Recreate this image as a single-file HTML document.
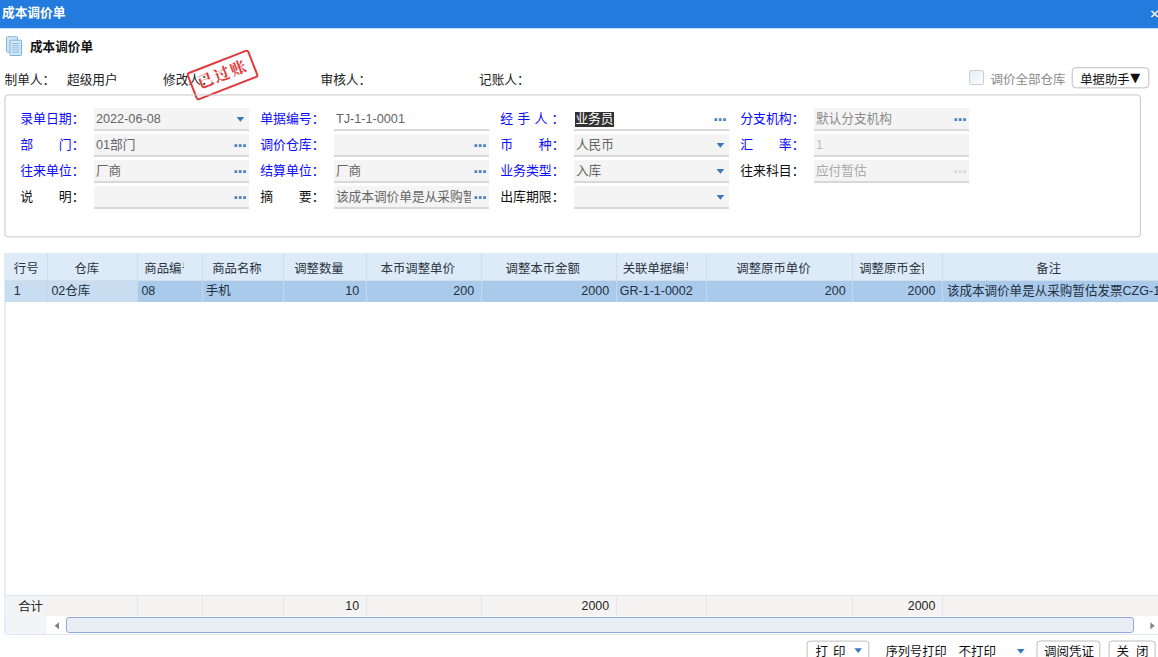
<!DOCTYPE html>
<html lang="zh-CN">
<head>
<meta charset="utf-8">
<title>成本调价单</title>
<style>
html,body{margin:0;padding:0;}
body{width:1158px;height:657px;overflow:hidden;background:#fff;position:relative;
  font-family:"Liberation Sans","Noto Sans CJK SC",sans-serif;font-size:12.7px;color:#222;}
.abs{position:absolute;white-space:nowrap;}
#titlebar{left:0;top:0;width:1158px;height:28px;background:#237cdd;border-bottom:1px solid #c3dbf6;}
#titlebar .t{left:2px;top:0.6px;line-height:24px;font-weight:bold;font-size:12.7px;color:#fff;}
#closex{left:1150px;top:3.4px;font-size:15.5px;font-weight:bold;line-height:22px;color:#dde9fa;text-shadow:0 1px 0 rgba(10,30,90,.45);font-family:"Liberation Sans",sans-serif;}
#h1{left:30px;top:36.8px;line-height:21px;font-weight:bold;font-size:12.6px;color:#111;}
.who{top:69.5px;line-height:21px;font-size:12.7px;color:#222;}
.lb{line-height:23px;margin-top:-1.1px;margin-left:-0.8px;font-size:12.9px;color:#0a0aff;width:58px;}
.lb.k{color:#111;}
.in{width:155.5px;height:21px;background:#f4f4f4;border-bottom:2px solid #d8d8d8;line-height:21px;font-size:12.7px;color:#646464;overflow:hidden;}
.in.w{background:#fff;}
.in span.v{position:absolute;left:2.2px;top:0.7px;}
.dots{position:absolute;right:2.2px;top:8.2px;width:13px;height:7px;fill:#4a84c6;}
.dots.dis{opacity:.22;}
.arr{position:absolute;right:4.9px;top:9px;width:7.8px;height:4.8px;background:#3a76bc;clip-path:polygon(0 0,100% 0,50% 100%);}
.sel{background:#333;color:#fff;display:inline-block;line-height:15px;padding:0 0.5px;margin-left:-1px;}
.th{height:27.5px;line-height:32px;font-size:12.4px;color:#2b3440;box-sizing:border-box;overflow:hidden;}
.td{height:21.5px;line-height:21.2px;font-size:12.5px;color:#22303f;box-sizing:border-box;padding:0 6.6px 0 3.1px;overflow:hidden;}
.tf{height:20.5px;line-height:20.5px;font-size:12.4px;color:#222;box-sizing:border-box;padding:0 6.6px 0 3.5px;overflow:hidden;}
.ft{line-height:23px;font-size:12.5px;color:#111;}
.btn{border:1px solid #c4c4c4;border-radius:4px;background:#fff;box-sizing:border-box;color:#111;text-align:center;}
</style>
</head>
<body>
<!-- title bar -->
<div id="titlebar" class="abs"><span class="abs t">成本调价单</span></div>
<div id="closex" class="abs">×</div>

<!-- document heading -->
<svg class="abs" style="left:5px;top:35px" width="18" height="22" viewBox="0 0 18 22">
  <rect x="1.5" y="1.7" width="11" height="15.5" rx="1" fill="#cfe4f5" stroke="#86b6df" stroke-width="1"/>
  <rect x="5" y="5.2" width="11.5" height="15.3" rx="1" fill="#d6e9f8" stroke="#7aaedb" stroke-width="1"/>
  <path d="M7 8.5h7.5M7 10.7h7.5M7 12.9h7.5M7 15.1h7.5M7 17.3h7.5" stroke="#8dbbe2" stroke-width="1"/>
</svg>
<div id="h1" class="abs">成本调价单</div>

<!-- people row -->
<div class="abs who" style="left:4.5px">制单人：</div>
<div class="abs who" style="left:67px">超级用户</div>
<div class="abs who" style="left:163px">修改人：</div>
<div class="abs who" style="left:320.5px">审核人：</div>
<div class="abs who" style="left:479px">记账人：</div>

<!-- stamp -->
<div class="abs" style="left:188.5px;top:59.5px;width:63px;height:26px;border:2px solid #e23a3a;border-radius:3px;transform:rotate(-21.3deg);transform-origin:50% 50%;
  font-family:'Liberation Serif','Noto Serif CJK SC',serif;font-weight:bold;font-size:16px;line-height:25px;color:#e23a3a;text-align:center;letter-spacing:1.5px;text-indent:0.5px;">已过账</div>

<!-- top-right controls -->
<div class="abs" style="left:969.3px;top:70px;width:13px;height:13px;border:1px solid #c3d0dc;border-radius:2px;background:linear-gradient(135deg,#e8eef4,#fbfcfd);"></div>
<div class="abs" style="left:990.5px;top:69.6px;line-height:21px;font-size:12.5px;color:#8a8a8a;">调价全部仓库</div>
<svg class="abs" style="left:1066px;top:62px" width="92" height="32" viewBox="1066 62 92 32"><rect x="1072.2" y="67.7" width="76.6" height="20.15" rx="3.5" ry="3.5" fill="#fff" stroke="#bdbdbd" stroke-width="1"/></svg>
<div class="abs" style="left:1080.3px;top:68.5px;line-height:23.5px;font-size:12.3px;color:#111;">单据助手<span style="font-family:'DejaVu Sans',sans-serif;font-size:13px;line-height:10px;margin-left:0.8px;vertical-align:1.2px">▼</span></div>

<!-- form panel -->
<svg class="abs" style="left:0;top:90px" width="1158" height="152" viewBox="0 90 1158 152"><rect x="4.95" y="94.95" width="1135.45" height="141.95" rx="3" ry="3" fill="none" stroke="#c6c6c6" stroke-width="1"/></svg>
<div class="abs lb " style="left:21px;top:108px">录单日期：</div>
<div class="abs in " style="left:93.7px;top:108px"><span class="v" style="">2022-06-08</span><i class="arr"></i></div>
<div class="abs lb " style="left:261px;top:108px">单据编号：</div>
<div class="abs in w" style="left:333.7px;top:108px"><span class="v" style="">TJ-1-1-0001</span></div>
<div class="abs lb " style="left:501px;top:108px"><span style='letter-spacing:4.2px'>经手人：</span></div>
<div class="abs in w" style="left:573.7px;top:108px"><span class="v" style=""><span class='sel'>业务员</span></span><svg class="dots" viewBox="0 0 13 7"><rect x="0.5" y="2.2" width="2.75" height="2.8"/><rect x="4.85" y="2.2" width="2.75" height="2.8"/><rect x="9.2" y="2.2" width="2.75" height="2.8"/></svg></div>
<div class="abs lb " style="left:741px;top:108px">分支机构：</div>
<div class="abs in " style="left:813.7px;top:108px"><span class="v" style="color:#8c8c8c">默认分支机构</span><svg class="dots" viewBox="0 0 13 7"><rect x="0.5" y="2.2" width="2.75" height="2.8"/><rect x="4.85" y="2.2" width="2.75" height="2.8"/><rect x="9.2" y="2.2" width="2.75" height="2.8"/></svg></div>
<div class="abs lb " style="left:21px;top:134px">部　　门：</div>
<div class="abs in " style="left:93.7px;top:134px"><span class="v" style="">01部门</span><svg class="dots" viewBox="0 0 13 7"><rect x="0.5" y="2.2" width="2.75" height="2.8"/><rect x="4.85" y="2.2" width="2.75" height="2.8"/><rect x="9.2" y="2.2" width="2.75" height="2.8"/></svg></div>
<div class="abs lb " style="left:261px;top:134px">调价仓库：</div>
<div class="abs in " style="left:333.7px;top:134px"><svg class="dots" viewBox="0 0 13 7"><rect x="0.5" y="2.2" width="2.75" height="2.8"/><rect x="4.85" y="2.2" width="2.75" height="2.8"/><rect x="9.2" y="2.2" width="2.75" height="2.8"/></svg></div>
<div class="abs lb " style="left:501px;top:134px">币　　种：</div>
<div class="abs in " style="left:573.7px;top:134px"><span class="v" style="">人民币</span><i class="arr"></i></div>
<div class="abs lb " style="left:741px;top:134px">汇　　率：</div>
<div class="abs in " style="left:813.7px;top:134px"><span class="v" style="color:#bdbdbd">1</span></div>
<div class="abs lb " style="left:21px;top:160px">往来单位：</div>
<div class="abs in " style="left:93.7px;top:160px"><span class="v" style="">厂商</span><svg class="dots" viewBox="0 0 13 7"><rect x="0.5" y="2.2" width="2.75" height="2.8"/><rect x="4.85" y="2.2" width="2.75" height="2.8"/><rect x="9.2" y="2.2" width="2.75" height="2.8"/></svg></div>
<div class="abs lb " style="left:261px;top:160px">结算单位：</div>
<div class="abs in " style="left:333.7px;top:160px"><span class="v" style="">厂商</span><svg class="dots" viewBox="0 0 13 7"><rect x="0.5" y="2.2" width="2.75" height="2.8"/><rect x="4.85" y="2.2" width="2.75" height="2.8"/><rect x="9.2" y="2.2" width="2.75" height="2.8"/></svg></div>
<div class="abs lb " style="left:501px;top:160px">业务类型：</div>
<div class="abs in " style="left:573.7px;top:160px"><span class="v" style="">入库</span><i class="arr"></i></div>
<div class="abs lb k" style="left:741px;top:160px">往来科目：</div>
<div class="abs in " style="left:813.7px;top:160px"><span class="v" style="color:#a9a9a9">应付暂估</span><svg class="dots dis" viewBox="0 0 13 7"><rect x="0.5" y="2.2" width="2.75" height="2.8"/><rect x="4.85" y="2.2" width="2.75" height="2.8"/><rect x="9.2" y="2.2" width="2.75" height="2.8"/></svg></div>
<div class="abs lb k" style="left:21px;top:186px">说　　明：</div>
<div class="abs in " style="left:93.7px;top:186px"><svg class="dots" viewBox="0 0 13 7"><rect x="0.5" y="2.2" width="2.75" height="2.8"/><rect x="4.85" y="2.2" width="2.75" height="2.8"/><rect x="9.2" y="2.2" width="2.75" height="2.8"/></svg></div>
<div class="abs lb k" style="left:261px;top:186px">摘　　要：</div>
<div class="abs in " style="left:333.7px;top:186px"><span class="v" style="width:135.5px;overflow:hidden;display:block">该成本调价单是从采购暂估发票</span><svg class="dots" viewBox="0 0 13 7"><rect x="0.5" y="2.2" width="2.75" height="2.8"/><rect x="4.85" y="2.2" width="2.75" height="2.8"/><rect x="9.2" y="2.2" width="2.75" height="2.8"/></svg></div>
<div class="abs lb k" style="left:501px;top:186px">出库期限：</div>
<div class="abs in " style="left:573.7px;top:186px"><i class="arr"></i></div>
<div class="abs" id="grid" style="left:4px;top:252.5px;width:1154px;height:382.5px;border-left:2px solid #e4edf7;border-bottom:1px solid #dde9f5;border-radius:0 0 0 3px;box-sizing:border-box;"></div>
<div class="abs" style="left:5px;top:252.5px;width:1153px;height:28.2px;background:#ddeaf7;border-bottom:1px solid #d2deea;box-sizing:border-box;"></div>
<div class="abs th" style="left:5px;top:252.5px;width:42.3px;text-align:center">行号</div>
<div class="abs th" style="left:47.3px;top:252.5px;width:90.0px;border-left:1px solid #cfdbe7;"><div style="margin-left:6px;width:65.0px;overflow:hidden;text-align:center">仓库</div></div>
<div class="abs th" style="left:137.3px;top:252.5px;width:64.4px;border-left:1px solid #cfdbe7;"><div style="margin-left:6px;width:39.4px;overflow:hidden;text-align:left">商品编号</div></div>
<div class="abs th" style="left:201.7px;top:252.5px;width:81.6px;border-left:1px solid #cfdbe7;"><div style="margin-left:6px;width:56.6px;overflow:hidden;text-align:center">商品名称</div></div>
<div class="abs th" style="left:283.3px;top:252.5px;width:82.4px;border-left:1px solid #cfdbe7;"><div style="margin-left:6px;width:57.4px;overflow:hidden;text-align:center">调整数量</div></div>
<div class="abs th" style="left:365.7px;top:252.5px;width:115.0px;border-left:1px solid #cfdbe7;"><div style="margin-left:6px;width:90.0px;overflow:hidden;text-align:center">本币调整单价</div></div>
<div class="abs th" style="left:480.7px;top:252.5px;width:135.0px;border-left:1px solid #cfdbe7;"><div style="margin-left:6px;width:110.0px;overflow:hidden;text-align:center">调整本币金额</div></div>
<div class="abs th" style="left:615.7px;top:252.5px;width:90.0px;border-left:1px solid #cfdbe7;"><div style="margin-left:6px;width:65.0px;overflow:hidden;text-align:left">关联单据编号</div></div>
<div class="abs th" style="left:705.7px;top:252.5px;width:146.5px;border-left:1px solid #cfdbe7;"><div style="margin-left:6px;width:121.5px;overflow:hidden;text-align:center">调整原币单价</div></div>
<div class="abs th" style="left:852.2px;top:252.5px;width:89.8px;border-left:1px solid #cfdbe7;"><div style="margin-left:6px;width:64.8px;overflow:hidden;text-align:left">调整原币金额</div></div>
<div class="abs th" style="left:942px;top:252.5px;width:224.4px;border-left:1px solid #cfdbe7;"><div style="margin-left:6px;width:199.4px;overflow:hidden;text-align:center">备注</div></div>
<div class="abs" style="left:5px;top:280.6px;width:132.3px;height:21.5px;background:#c9ddf1;"></div>
<div class="abs" style="left:137.3px;top:280.6px;width:1020.7px;height:21.5px;background:#a9caeb;"></div>
<div class="abs td" style="top:280.6px;left:5px;width:42.3px;padding-left:8.7px">1</div>
<div class="abs td" style="top:280.6px;left:47.3px;width:90.0px;border-left:1px solid #c3d7ea;">02仓库</div>
<div class="abs td" style="top:280.6px;left:137.3px;width:64.4px;border-left:1px solid #c4d9ee;">08</div>
<div class="abs td" style="top:280.6px;left:201.7px;width:81.6px;border-left:1px solid #c4d9ee;">手机</div>
<div class="abs td" style="top:280.6px;left:283.3px;width:82.4px;text-align:right;border-left:1px solid #c4d9ee;">10</div>
<div class="abs td" style="top:280.6px;left:365.7px;width:115.0px;text-align:right;border-left:1px solid #c4d9ee;">200</div>
<div class="abs td" style="top:280.6px;left:480.7px;width:135.0px;text-align:right;border-left:1px solid #c4d9ee;">2000</div>
<div class="abs td" style="top:280.6px;left:615.7px;width:90.0px;border-left:1px solid #c4d9ee;">GR-1-1-0002</div>
<div class="abs td" style="top:280.6px;left:705.7px;width:146.5px;text-align:right;border-left:1px solid #c4d9ee;">200</div>
<div class="abs td" style="top:280.6px;left:852.2px;width:89.8px;text-align:right;border-left:1px solid #c4d9ee;">2000</div>
<div class="abs td" style="top:280.6px;left:942px;width:216px;border-left:1px solid #c4d9ee;font-size:12.55px;padding-left:3.9px;">该成本调价单是从采购暂估发票CZG-1-1-0001</div>
<div class="abs" style="left:5px;top:595.3px;width:1153px;height:21px;background:#f5f4f3;border-top:1px solid #d6e6f5;box-sizing:border-box;"></div>
<div class="abs tf" style="left:5px;top:596.3px;width:42.3px;text-align:left;padding-left:13.2px;padding-right:0;background:#f3f4f6;line-height:22.6px">合计</div>
<div class="abs tf" style="left:47.3px;top:595.8px;width:90.0px;text-align:right;border-left:1px solid #f0f2f5;"></div>
<div class="abs tf" style="left:137.3px;top:595.8px;width:64.4px;text-align:right;border-left:1px solid #dbe8f4;"></div>
<div class="abs tf" style="left:201.7px;top:595.8px;width:81.6px;text-align:right;border-left:1px solid #dbe8f4;"></div>
<div class="abs tf" style="left:283.3px;top:595.8px;width:82.4px;text-align:right;border-left:1px solid #dbe8f4;">10</div>
<div class="abs tf" style="left:365.7px;top:595.8px;width:115.0px;text-align:right;border-left:1px solid #dbe8f4;"></div>
<div class="abs tf" style="left:480.7px;top:595.8px;width:135.0px;text-align:right;border-left:1px solid #dbe8f4;">2000</div>
<div class="abs tf" style="left:615.7px;top:595.8px;width:90.0px;text-align:right;border-left:1px solid #dbe8f4;"></div>
<div class="abs tf" style="left:705.7px;top:595.8px;width:146.5px;text-align:right;border-left:1px solid #dbe8f4;"></div>
<div class="abs tf" style="left:852.2px;top:595.8px;width:89.8px;text-align:right;border-left:1px solid #dbe8f4;">2000</div>
<div class="abs tf" style="left:942px;top:595.8px;width:216px;text-align:right;border-left:1px solid #dbe8f4;"></div>
<div class="abs" style="left:6px;top:616.3px;width:41.3px;height:18px;background:#f2f4f7;"></div>
<div class="abs" style="left:47.3px;top:616.3px;width:1110.7px;height:18px;background:#fff;"></div>
<div class="abs" style="left:66.3px;top:617.3px;width:1068px;height:16px;background:#e9eef5;border:1px solid #8eaadb;border-radius:3px;box-sizing:border-box;"></div>
<div class="abs" style="left:54.6px;top:622.2px;width:4.6px;height:7.2px;background:#808080;clip-path:polygon(100% 0,100% 100%,0 50%);"></div>
<div class="abs" style="left:1150.3px;top:622.2px;width:4.6px;height:7.2px;background:#8a8a8a;clip-path:polygon(0 0,0 100%,100% 50%);"></div>
<svg class="abs" style="left:800px;top:636px" width="358" height="21" viewBox="800 636 358 21">
<rect x="807.1" y="641.1" width="61.7" height="26" rx="3" fill="#fff" stroke="#bcbcbc"/>
<rect x="1037" y="641" width="62.8" height="26" rx="3" fill="#fff" stroke="#bcbcbc"/>
<rect x="1109.1" y="641" width="46" height="26" rx="3" fill="#fff" stroke="#bcbcbc"/>
</svg>
<div class="abs ft" style="left:815.5px;top:640.5px;"><span style="letter-spacing:5px">打</span>印</div>
<div class="abs" style="left:854.4px;top:648.3px;width:7.6px;height:4.8px;background:#3a76bc;clip-path:polygon(0 0,100% 0,50% 100%);"></div>
<div class="abs ft" style="left:885.7px;top:640.5px;font-size:12.2px">序列号打印</div>
<div class="abs ft" style="left:958.5px;top:640.5px;">不打印</div>
<div class="abs" style="left:1017px;top:648.9px;width:7.6px;height:4.8px;background:#3a76bc;clip-path:polygon(0 0,100% 0,50% 100%);"></div>
<div class="abs ft" style="left:1044px;top:640.5px;">调阅凭证</div>
<div class="abs ft" style="left:1116.5px;top:640.5px;"><span style="letter-spacing:7px">关</span>闭</div>
</body>
</html>
